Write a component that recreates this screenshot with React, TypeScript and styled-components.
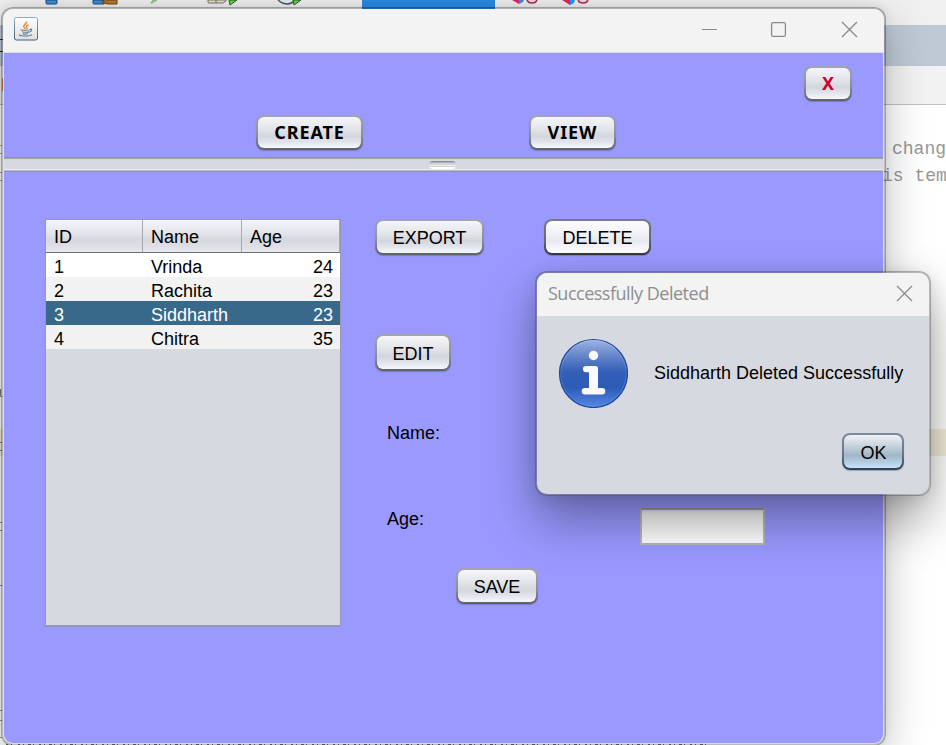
import React from "react";
import styled, { createGlobalStyle, css } from "styled-components";

const GlobalStyle = createGlobalStyle`
  * { box-sizing: border-box; }
  html, body { margin: 0; padding: 0; overflow: hidden; }
  body { font-family: "Liberation Sans", Arial, sans-serif; font-size: 18px; color: #000; }
`;

const Desktop = styled.div`
  position: relative;
  width: 946px;
  height: 745px;
  overflow: hidden;
  background: #fff;
`;

/* ---------- editor behind the windows ---------- */
const Editor = styled.div`
  display: flex;
  flex-direction: column;
  height: 745px;
`;
const EditorToolbar = styled.div`
  flex: 0 0 25px;
  background: #f0f0f0;
  svg { display: block; }
`;
const TabStrip = styled.div`
  flex: 0 0 41px;
  background: #bec9d5;
`;
const EditorToolRow = styled.div`
  flex: 0 0 39px;
  background: #f2f2f2;
  border-bottom: 1px solid #c0c0c0;
`;
const Code = styled.div`
  display: flex;
  flex-direction: column;
  flex: 1;
  padding-top: 31px;
`;
const CodeLine = styled.div<{ $indent: number }>`
  height: 27px;
  line-height: 27px;
  padding-left: ${(p) => p.$indent}px;
  font-family: "Liberation Mono", "Courier New", monospace;
  font-size: 18px;
  color: #969696;
  white-space: pre;
`;
const CurrentLine = styled.div`
  height: 27px;
  margin-top: 239px;
  background: #f4eeda;
`;
const Edge = styled.svg`
  position: absolute;
  left: 0;
  top: 0;
`;

/* ---------- windows ---------- */
const Frame = styled.section`
  position: absolute;
  display: flex;
  flex-direction: column;
  border: 2px solid rgba(0, 0, 0, 0.27);
  background-clip: padding-box;
  overflow: hidden;
`;
const MainWindow = styled(Frame)`
  left: 1px;
  top: 7px;
  width: 885px;
  height: 739px;
  border-radius: 12px;
  background-color: #dcdce6;
  box-shadow: 0 12px 44px rgba(0, 0, 0, 0.24), 0 0 10px rgba(0, 0, 0, 0.08);
`;
const Dialog = styled(Frame)`
  left: 535px;
  top: 271px;
  width: 396px;
  height: 225px;
  border-color: rgba(70, 70, 70, 0.38);
  border-radius: 12px;
  background-color: #d6d9df;
  box-shadow: 0 24px 50px rgba(0, 0, 0, 0.36), 0 2px 16px rgba(0, 0, 0, 0.1);
`;
const TitleBar = styled.header`
  display: flex;
  flex: 0 0 43px;
  align-items: center;
  background: #f3f3f3;
  color: #8e8e8e;
`;
const MainTitleBar = styled(TitleBar)`
  padding: 0 26px 3px 11px;
  justify-content: space-between;
`;
const WindowControls = styled.div`
  display: flex;
  gap: 53px;
  svg { display: block; }
  svg:nth-child(2) { margin: 0 1px 0 -1px; }
`;
const DialogTitleBar = styled(TitleBar)`
  padding: 0 16px 2px 11px;
  justify-content: space-between;
  svg { display: block; }
`;
const DialogTitle = styled.h1`
  margin: 0;
  padding-bottom: 2px;
  font: 400 18px/24px "Open Sans", "Noto Sans", sans-serif;
  letter-spacing: -0.5px;
`;

const Content = styled.main`
  display: flex;
  flex: 1;
  flex-direction: column;
  margin: 1px 1px 1px 1px;
  border-radius: 0 0 9px 9px;
  background: #9999ff;
  overflow: hidden;
`;
const TopPanel = styled.div`
  flex: 0 0 104px;
  padding-top: 13px;
`;
const CloseRow = styled.div`
  display: flex;
  justify-content: flex-end;
  padding-right: 31px;
`;
const NavRow = styled.nav`
  display: flex;
  gap: 166px;
  padding: 14px 0 0 252px;
`;
const Divider = styled.div`
  display: flex;
  flex: 0 0 15px;
  justify-content: center;
  align-items: flex-start;
  padding: 4px 2px 0 0;
  background: linear-gradient(#8e909f 0 1px, #a6a8b2 1px 2px, #d0d3da 2px 3px, #d6d9df 3px 12px, #e9ebef 12px 13px, #babdc5 13px 14px, #9293b5 14px 15px);
`;
const Grip = styled.span`
  width: 27px;
  height: 8px;
  border-radius: 4px;
  background: linear-gradient(#888b93 0 1px, #b0b3ba 1px 2px, #d0d3d8 2px 4px, #eef0f3 4px 5px, #cdd0d5 5px 6px, #fff 6px);
`;

const Button = styled.button<{ $w: number; $tone?: "normal" | "focus" | "default"; $strong?: boolean; $red?: boolean }>`
  display: flex;
  align-items: center;
  justify-content: center;
  flex: none;
  width: ${(p) => p.$w}px;
  height: ${(p) => (p.$strong ? 35 : 36)}px;
  padding: 1px 0 0;
  border: 2px solid transparent;
  border-radius: 8px;
  font: 400 18px/20px "Liberation Sans", Arial, sans-serif;
  color: #000;
  white-space: nowrap;
  background:
    linear-gradient(#f6f6f8, #e3e5e9 38%, #d3d6dc 62%, #dfe2ea 78%, #f6f8ff) padding-box,
    linear-gradient(#a3a5ae, #8b8d9c 60%, #5f6168) border-box;
  box-shadow: 0 1px 1px rgba(50, 50, 90, 0.3);
  ${(p) => p.$tone === "focus" && css`
    background:
      linear-gradient(#fcfcfd, #f1f2f6 38%, #e6e9f1 62%, #f2f4fa 78%, #ffffff) padding-box,
      linear-gradient(#777985, #686a76 60%, #33353b) border-box;
  `}
  ${(p) => p.$tone === "default" && css`
    height: 37px;
    background:
      linear-gradient(#f0f3f6, #c3d0da 35%, #a2b6c8 62%, #b3cadd 80%, #c8e2f6) padding-box,
      linear-gradient(#7e8c9c, #62758a 60%, #2b4057) border-box;
    padding: 2px 0 0 1px;
  `}
  ${(p) => p.$strong && css`font: 700 18px/20px "Noto Sans", sans-serif; letter-spacing: ${p.$red ? 0 : 0.9}px; padding: 0 0 1px;`}
  ${(p) => p.$red && css`color: #cc0033;`}
`;

const Work = styled.div`
  display: flex;
  flex: 1;
  align-items: flex-start;
  gap: 34px;
  padding: 47px 0 0 41px;
`;
const TableBox = styled.div`
  width: 296px;
  height: 408px;
  border: 1px solid #9597b8;
  border-bottom-width: 2px;
  background: #d6d9df;
`;
const Table = styled.table`
  width: 294px;
  border-collapse: separate;
  border-spacing: 0;
  table-layout: fixed;
`;
const HeadCell = styled.th<{ $w: number }>`
  width: ${(p) => p.$w}px;
  height: 33px;
  padding: 1px 8px 0;
  border-right: 1px solid #a6a8b0;
  border-bottom: 1px solid #686b75;
  text-align: left;
  font-weight: 400;
  line-height: 20px;
  background: linear-gradient(#f4f5f7, #e1e3e8 45%, #d5d8de 60%, #dee0e6 85%, #e9ebf0);
`;
const Row = styled.tr<{ $selected?: boolean }>`
  background: #fff;
  &:nth-child(even) { background: #f2f2f2; }
  ${(p) => p.$selected && css`background: #39698a; color: #fff;`}
`;
const Cell = styled.td<{ $right?: boolean }>`
  height: 24px;
  padding: ${(p) => (p.$right ? "4px 7px 0 8px" : "4px 8px 0")};
  line-height: 20px;
  text-align: ${(p) => (p.$right ? "right" : "left")};
`;

const Form = styled.div`
  display: flex;
  flex-direction: column;
  width: 390px;
`;
const Actions = styled.div`
  display: flex;
  gap: 60px;
  margin-bottom: 79px;
`;
const Label = styled.label`
  line-height: 20px;
`;
const NameRow = styled.div`
  padding: 52px 0 0 12px;
`;
const AgeRow = styled.div`
  display: flex;
  justify-content: space-between;
  padding: 64px 0 0 12px;
  ${Label} { padding-top: 1px; }
`;
const Field = styled.input`
  width: 125px;
  height: 37px;
  border: 2px solid #b5b5c0;
  border-top-color: #98989d;
  background: linear-gradient(#e4e4e4 0 1px, #f6f6f6 4px, #fff);
  outline: none;
`;
const SaveRow = styled.div`
  padding: 23px 0 0 81px;
`;
const EditButton = styled(Button)`
  height: 37px;
  padding-top: 2px;
`;

const DialogBody = styled.div`
  display: flex;
  flex: 1;
  flex-direction: column;
  padding: 22px 25px 23px 21px;
`;
const Message = styled.div`
  display: flex;
  gap: 26px;
  span { padding-top: 25px; line-height: 20px; white-space: nowrap; }
`;
const DialogActions = styled.div`
  display: flex;
  justify-content: flex-end;
  margin-top: 25px;
`;

const rows = [
  { id: 1, name: "Vrinda", age: 24 },
  { id: 2, name: "Rachita", age: 23 },
  { id: 3, name: "Siddharth", age: 23 },
  { id: 4, name: "Chitra", age: 35 },
];

const CloseGlyph = () => (
  <svg width="17" height="17" viewBox="0 0 17 17" stroke="#8a8a8a" strokeWidth="1.3" fill="none">
    <path d="M1 1 16 16M16 1 1 16" />
  </svg>
);

const JavaIcon = () => (
  <svg width="24" height="24" viewBox="0 0 24 24" fill="none">
    <defs>
      <linearGradient id="tile" x1="0" y1="0" x2="0" y2="1">
        <stop offset="0" stopColor="#fff" />
        <stop offset="1" stopColor="#dededf" />
      </linearGradient>
      <linearGradient id="tileEdge" x1="0" y1="0" x2="0" y2="1">
        <stop offset="0" stopColor="#93a9bc" />
        <stop offset="1" stopColor="#3e5f78" />
      </linearGradient>
    </defs>
    <rect x=".5" y=".5" width="23" height="22.5" rx="2" fill="url(#tile)" stroke="url(#tileEdge)" />
    <path d="M12.500 4.500c1 2-3.300 3-2.800 5 .2 1 1.300 1.600 1.500 2.500M14.500 7.800c-2 .6-2.600 1.600-1.600 2.600.5.600 0 1.200-.4 1.600" stroke="#ee8434" strokeWidth="1.400" />
    <path d="M7 12.500c-1 1 8 1 9.500.1M8 14.600c1 .9 5.500.8 7 .1M8.700 16.500c1.200.8 4 .7 5.300.1M16 12.200c2.500-.6 2 2.200-.8 3M6 17.600c-3 1.600 9.500 2.200 12 .1" stroke="#587b98" strokeWidth="1.100" />
  </svg>
);

const InfoIcon = () => (
  <svg width="70" height="70" viewBox="0 0 70 70">
    <defs>
      <linearGradient id="info" x1="0" y1="0" x2="0" y2="1">
        <stop offset="0" stopColor="#9db3e1" />
        <stop offset=".28" stopColor="#5c7fc6" />
        <stop offset=".48" stopColor="#325fb6" />
        <stop offset=".7" stopColor="#2c5bb6" />
        <stop offset="1" stopColor="#5687e4" />
      </linearGradient>
      <linearGradient id="infoRim" x1="0" y1="0" x2="0" y2="1">
        <stop offset="0" stopColor="#b0c2e8" />
        <stop offset=".5" stopColor="#4a75c8" />
        <stop offset="1" stopColor="#5d8ee9" />
      </linearGradient>
    </defs>
    <circle cx="35.500" cy="35.500" r="34" fill="url(#info)" stroke="#20469a" strokeWidth="1.200" />
    <circle cx="35.500" cy="35.500" r="32.700" fill="none" stroke="url(#infoRim)" strokeWidth="1" opacity=".7" />
    <circle cx="35.500" cy="17.500" r="4.700" fill="#fafafc" />
    <path d="M28 28h9.500q2.500 0 2.500 2.500V50h4a3.200 3.200 0 0 1 0 6.600H27a3.200 3.200 0 0 1 0-6.600h4V34.200h-3a3.100 3.100 0 0 1 0-6.200Z" fill="#fafafc" />
  </svg>
);

const ToolbarIcons = () => (
  <svg width="946" height="25" viewBox="0 0 946 25">
    <path d="M46 0h11v3q0 1-1 1h-9q-1 0-1-1Z" fill="#3d91d8" stroke="#174e83" />
    <path d="M93 0h11v4H94q-1 0-1-1Z" fill="#3d91d8" stroke="#174e83" />
    <path d="M102 1q6 0 7-1h8v4h-9q-5 0-6-3Z" fill="#b77a28" stroke="#70450f" />
    <path d="m151 3 2-3h4l-5 3Z" fill="#a9cfa2" stroke="#8db487" />
    <path d="M208 0h18v1l-3 2h-14q-1 0-1-1Z" fill="#e9e5bd" stroke="#777" />
    <path d="M216 0v3" stroke="#777" />
    <path d="M229 0h8l-7 5Z" fill="#72d149" stroke="#23621d" />
    <path d="M278 0q4 4 10 4 5-1 7-4" fill="#e2edf5" stroke="#555" strokeWidth="1.500" />
    <path d="M293 0h8l-7 5Z" fill="#72d149" stroke="#23621d" />
    <path d="M362 0h133v9H362Z" fill="#2c8be3" />
    <path d="M512 0h7v4Z" fill="#e7235d" />
    <path d="M519 0h5l-1 2-4 2Z" fill="#2599ee" />
    <path d="M527 0q1 3 5 3t5-3" fill="#f4d6df" stroke="#b42a55" strokeWidth="1.500" />
    <path d="M562 0h8v5Z" fill="#e7235d" />
    <path d="M570 0h5l-1 3-4 2Z" fill="#2599ee" />
    <path d="M578 0q1 3 5 3t5-3" fill="#f4d6df" stroke="#b42a55" strokeWidth="1.500" />
  </svg>
);

export default function App() {
  return (
    <Desktop>
      <GlobalStyle />
      <Editor>
        <EditorToolbar><ToolbarIcons /></EditorToolbar>
        <TabStrip />
        <EditorToolRow />
        <Code>
          <CodeLine $indent={892}>chang</CodeLine>
          <CodeLine $indent={882}>is tem</CodeLine>
          <CurrentLine />
        </Code>
      </Editor>
      <Edge width="946" height="745" viewBox="0 0 946 745" fill="none">
        <path d="M0 39.500h3M0 51.500h3" stroke="#333" />
        <path d="M2.500 78v13" stroke="#d98a3c" />
        <path d="M0 145.500h2M0 153.500h2M0 172.500h2M0 180.500h2M0 396.500h3" stroke="#9eabbd" />
        <path d="M.5 389v7" stroke="#777" />
        <path d="M0 442.500h2M0 450.500h2M0 585.500h2" stroke="#6f8cc8" />
        <path d="M0 522.500h2M0 530.500h2M0 710.500h2M0 720.500h2M0 737.500h2" stroke="#a09290" />
        <path d="M6 744.500h6M18 744.500h690" stroke="#75706c" strokeDasharray="2 3 1 4 3 2 1 5" />
      </Edge>

      <MainWindow>
        <MainTitleBar>
          <JavaIcon />
          <WindowControls>
            <svg width="16" height="17" viewBox="0 0 16 17"><path d="M0 8.500h15" stroke="#8a8a8a" /></svg>
            <svg width="17" height="17" viewBox="0 0 17 17"><rect x="1.600" y="1.600" width="13.800" height="13.800" rx="1.500" fill="none" stroke="#8a8a8a" strokeWidth="1.300" /></svg>
            <CloseGlyph />
          </WindowControls>
        </MainTitleBar>
        <Content>
          <TopPanel>
            <CloseRow><Button $w={48} $strong $red>X</Button></CloseRow>
            <NavRow>
              <Button $w={107} $strong>CREATE</Button>
              <Button $w={87} $strong>VIEW</Button>
            </NavRow>
          </TopPanel>
          <Divider><Grip /></Divider>
          <Work>
            <TableBox>
              <Table>
                <thead>
                  <tr>
                    <HeadCell $w={97}>ID</HeadCell>
                    <HeadCell $w={99}>Name</HeadCell>
                    <HeadCell $w={98}>Age</HeadCell>
                  </tr>
                </thead>
                <tbody>
                  {rows.map((r) => (
                    <Row key={r.id} $selected={r.id === 3}>
                      <Cell>{r.id}</Cell>
                      <Cell>{r.name}</Cell>
                      <Cell $right>{r.age}</Cell>
                    </Row>
                  ))}
                </tbody>
              </Table>
            </TableBox>
            <Form>
              <Actions>
                <Button $w={109}>EXPORT</Button>
                <Button $w={107} $tone="focus">DELETE</Button>
              </Actions>
              <EditButton $w={76}>EDIT</EditButton>
              <NameRow><Label>Name:</Label></NameRow>
              <AgeRow>
                <Label htmlFor="age">Age:</Label>
                <Field id="age" />
              </AgeRow>
              <SaveRow><Button $w={82}>SAVE</Button></SaveRow>
            </Form>
          </Work>
        </Content>
      </MainWindow>

      <Dialog role="dialog">
        <DialogTitleBar>
          <DialogTitle>Successfully Deleted</DialogTitle>
          <CloseGlyph />
        </DialogTitleBar>
        <DialogBody>
          <Message>
            <InfoIcon />
            <span>Siddharth Deleted Successfully</span>
          </Message>
          <DialogActions><Button $w={62} $tone="default">OK</Button></DialogActions>
        </DialogBody>
      </Dialog>
    </Desktop>
  );
}
